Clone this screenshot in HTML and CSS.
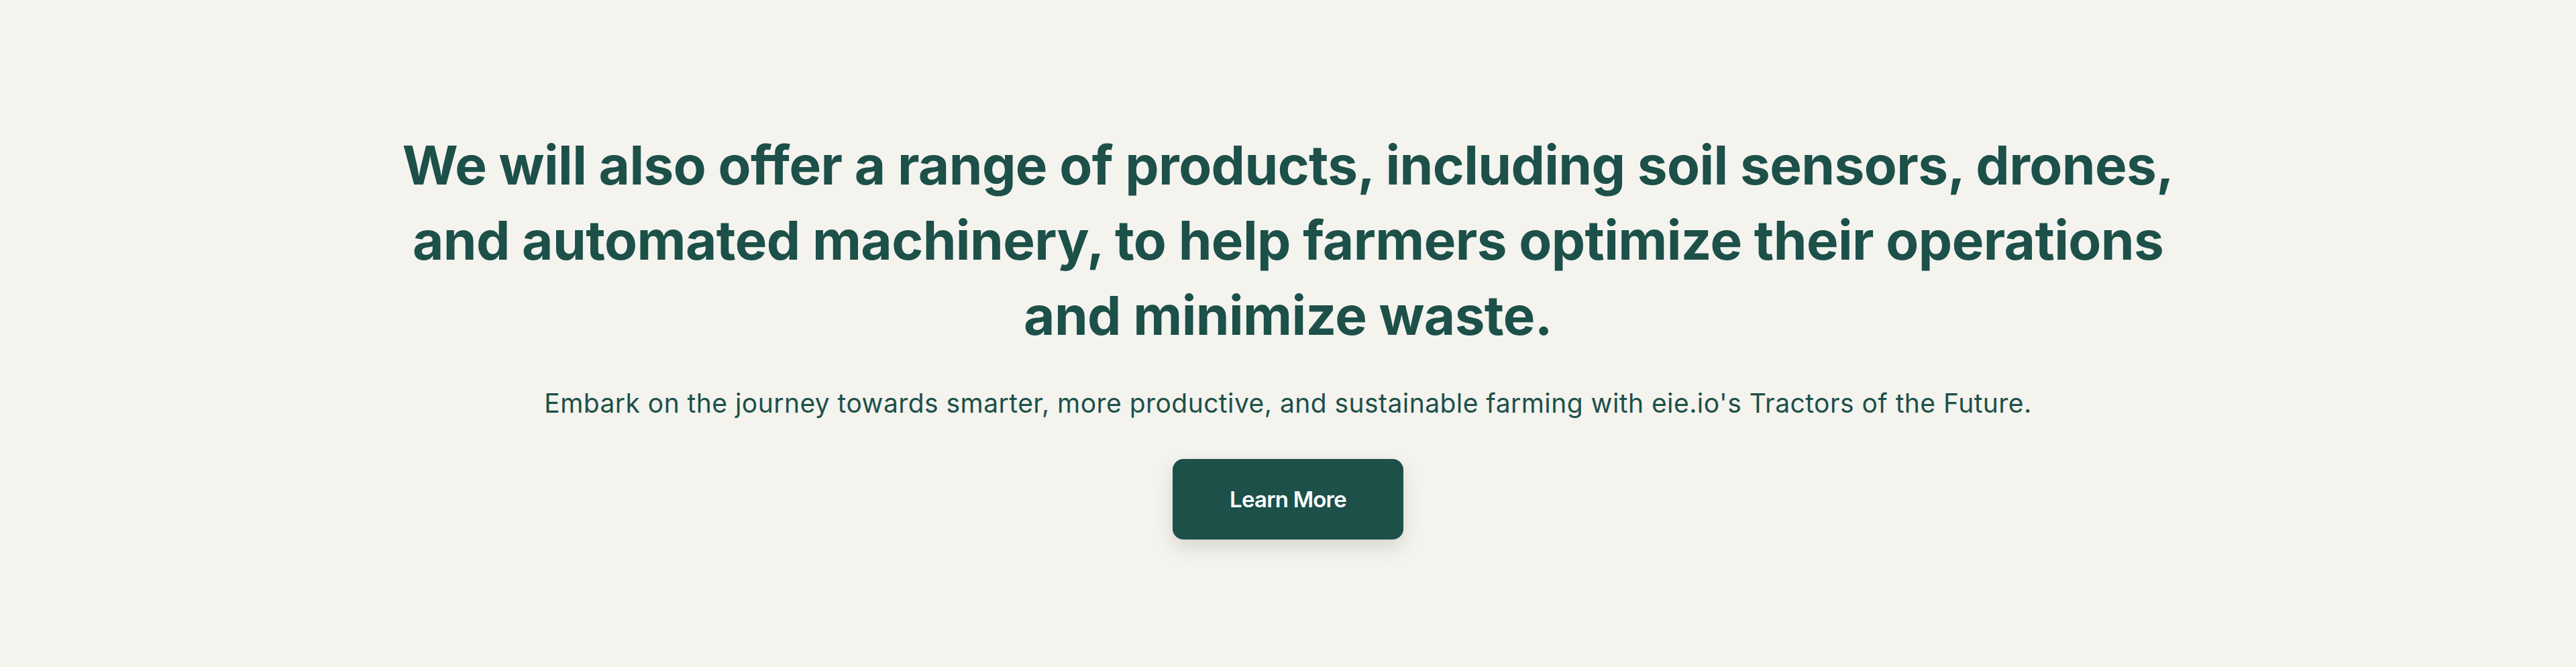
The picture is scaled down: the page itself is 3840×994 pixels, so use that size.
FILE: index.html
```html
<!DOCTYPE html>
<html lang="en">
<head>
<meta charset="utf-8">
<title>Tractors of the Future</title>
<link rel="stylesheet" href="styles.css">
</head>
<body>
<section class="hero">
  <h1 class="hero-title">We will also offer a range of products, including soil sensors, drones, and automated machinery, to help farmers optimize their operations and minimize waste.</h1>
  <p class="hero-text">Embark on the journey towards smarter, more productive, and sustainable farming with eie.io's Tractors of the Future.</p>
  <a class="hero-button" href="#">Learn More</a>
</section>
</body>
</html>
```

FILE: styles.css
```css
html, body {
  margin: 0;
  padding: 0;
}
body {
  background: #f4f3ee;
  color: #1c5049;
  font-family: Inter, "Liberation Sans", sans-serif;
}
.hero {
  display: flex;
  flex-direction: column;
  align-items: center;
  text-align: center;
  padding: 190px 0 150px;
}
.hero-title {
  margin: 0;
  max-width: 2700px;
  font-family: Inter, "Liberation Sans", sans-serif;
  font-weight: 700;
  font-size: 80px;
  line-height: 112px;
  letter-spacing: -0.6px;
  color: #1c5049;
}
.hero-text {
  margin: 47px 0 0;
  font-size: 39px;
  line-height: 56px;
  letter-spacing: 0.45px;
  font-weight: 400;
  color: #1c5049;
}
.hero-button {
  margin-top: 55px;
  display: inline-block;
  padding: 39px 85px;
  border-radius: 16px;
  background: #1c5049;
  color: #ffffff;
  font-size: 33px;
  line-height: 42px;
  letter-spacing: -0.8px;
  font-weight: 600;
  text-decoration: none;
  box-shadow: 0 12px 30px rgba(0, 0, 0, 0.12);
}
```
